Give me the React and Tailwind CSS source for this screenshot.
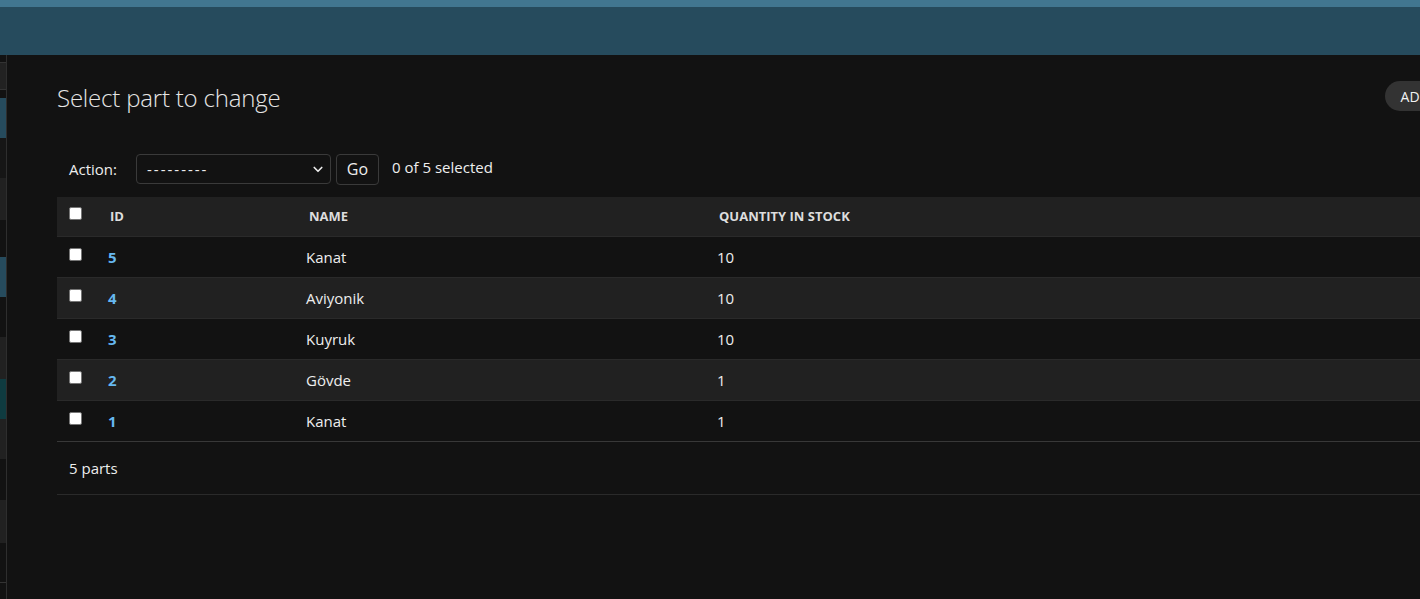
import React from "react";

const rows = [
  { id: 5, name: "Kanat", qty: 10 },
  { id: 4, name: "Aviyonik", qty: 10 },
  { id: 3, name: "Kuyruk", qty: 10 },
  { id: 2, name: "Gövde", qty: 1 },
  { id: 1, name: "Kanat", qty: 1 },
];

function Check() {
  return <span className="block w-[13px] h-[13px] rounded-[2px] bg-white border border-[#767676]" />;
}

export default function App() {
  return (
    <div
      className="w-full h-[599px] overflow-hidden bg-[#121212] text-[#eeeeee]"
      style={{ fontFamily: '"Open Sans", "Noto Sans", sans-serif' }}
    >
      <div className="h-[7px] bg-[#417690]" />
      <div className="h-[48px] bg-[#264b5d]" />
      <div className="flex h-[544px]">
        <div className="w-[7px] shrink-0 border-r border-[#2e2e2e] flex flex-col">
          <div className="h-[7px]" />
          <div className="h-[28px] bg-[#222] border-y border-[#333]" />
          <div className="h-[8px]" />
          <div className="h-[40px] bg-[#264b5d]" />
          <div className="h-[40px] bg-[#161616]" />
          <div className="h-[42px] bg-[#212121]" />
          <div className="h-[37px]" />
          <div className="h-[40px] bg-[#264b5d]" />
          <div className="h-[40px]" />
          <div className="h-[42px] bg-[#212121]" />
          <div className="h-[40px] bg-[#0f3b40]" />
          <div className="h-[40px] bg-[#212121]" />
          <div className="h-[41px]" />
          <div className="h-[43px] bg-[#212121]" />
          <div className="h-[40px] border-b border-[#333]" />
        </div>
        <div className="flex-1 min-w-0 overflow-hidden">
          <div className="w-[1490px] pl-[50px] pt-[26px]">
            <div className="flex items-start justify-between">
              <h1 className="text-[24px] leading-[34px] font-light text-[#e6e6e6] tracking-[-0.2px]">
                Select part to change
              </h1>
              <div className="h-[30px] rounded-full bg-[#333] px-[15px] flex items-center text-[14px] text-[#f2f2f2] tracking-wide whitespace-nowrap">
                ADD PART&nbsp;+
              </div>
            </div>
            <div className="mt-[38px] flex items-center h-[32px] pl-[12px] text-[15px]">
              <span className="w-[67px]">Action:</span>
              <div className="w-[195px] h-[30px] rounded-[4px] border border-[#3a3a3a] flex items-center justify-between pl-[10px] pr-[6px]">
                <span className="tracking-[2px]">---------</span>
                <svg width="12" height="12" viewBox="0 0 16 16" fill="none" stroke="#eee" strokeWidth="2.2" strokeLinecap="round" strokeLinejoin="round">
                  <path d="M3 6l5 5 5-5" />
                </svg>
              </div>
              <div className="ml-[5px] w-[43px] h-[31px] rounded-[4px] border border-[#3a3a3a] flex items-center justify-center text-[16px]">
                Go
              </div>
              <span className="ml-[13px] -mt-[3px]">0 of 5 selected</span>
            </div>
            <div className="mt-[12px]">
              <div className="grid grid-cols-[43px_198px_411px_1fr] h-[40px] items-center bg-[#212121] border-b border-[#2a2a2a] text-[13px] font-bold text-[#dddddd] uppercase">
                <div className="pl-[12px] -mt-[6px]"><Check /></div>
                <div className="pl-[10px]">ID</div>
                <div className="pl-[11px]">Name</div>
                <div className="pl-[10px]">Quantity in stock</div>
              </div>
              {rows.map((r, i) => (
                <div
                  key={r.id}
                  className={`grid grid-cols-[43px_198px_411px_1fr] items-center text-[15px] h-[41px] border-b ${
                    i === 4 ? "border-[#383838]" : "border-[#2a2a2a]"
                  } ${i % 2 === 1 ? "bg-[#212121]" : "bg-[#121212]"}`}
                >
                  <div className="pl-[12px] -mt-[6px]"><Check /></div>
                  <div className="pl-[8px] pt-[1px] font-bold text-[#66b8f0]">{r.id}</div>
                  <div className="pl-[8px] pt-[1px]">{r.name}</div>
                  <div className="pl-[8px] pt-[1px]">{r.qty}</div>
                </div>
              ))}
              <div className="h-[53px] flex items-center pl-[12px] text-[15px] border-b border-[#2a2a2a]">
                5 parts
              </div>
            </div>
          </div>
        </div>
      </div>
    </div>
  );
}
